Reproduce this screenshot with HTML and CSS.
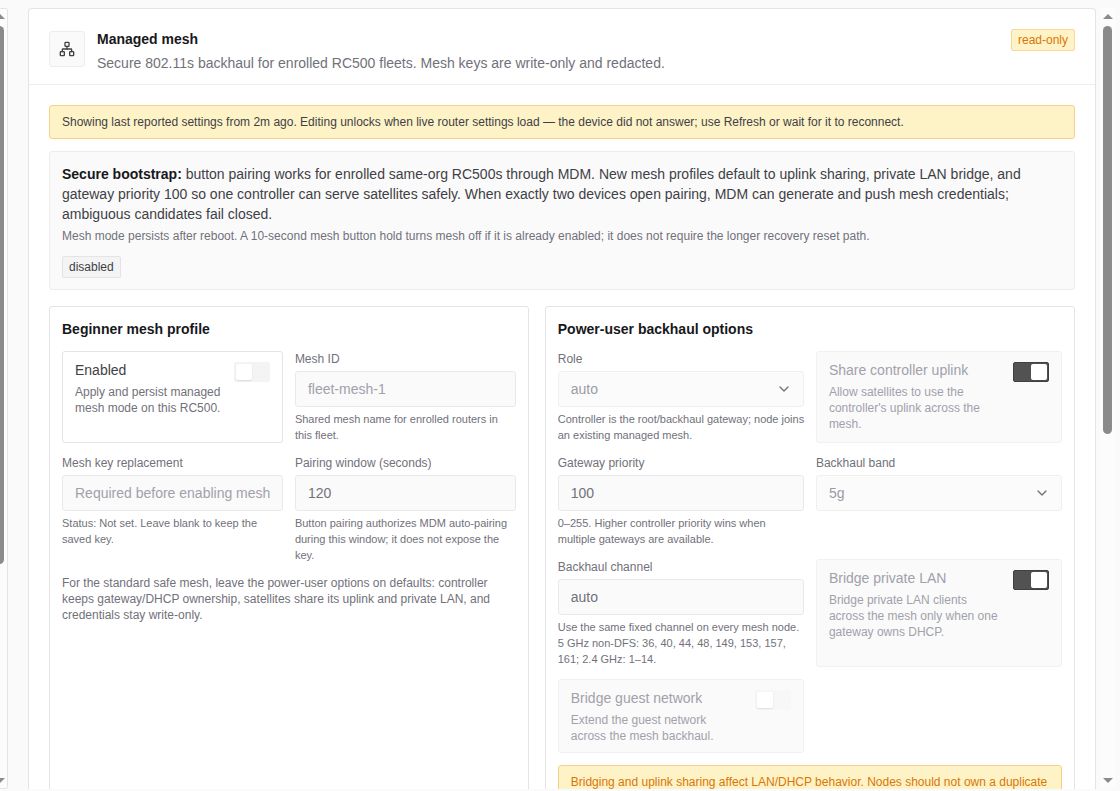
FILE: index.html
```html
<!DOCTYPE html>
<html lang="en">
<head>
    <meta charset="UTF-8">
    <meta name="viewport" content="width=device-width, initial-scale=1.0">
    <title>Managed mesh</title>
    <link rel="stylesheet" href="styles.css">
</head>
<body>
    <div class="shell">
        <aside class="side">
            <div class="scrollbar">
                <span class="arrow up"></span>
                <span class="thumb thumb-side"></span>
                <span class="arrow down"></span>
            </div>
        </aside>

        <main class="card">
            <header class="card-header">
                <div class="icon-box">
                    <svg width="16" height="16" viewBox="0 0 24 24" fill="none" stroke="currentColor" stroke-width="2" stroke-linecap="round" stroke-linejoin="round" aria-hidden="true">
                        <rect x="16" y="16" width="6" height="6" rx="1"/>
                        <rect x="2" y="16" width="6" height="6" rx="1"/>
                        <rect x="9" y="2" width="6" height="6" rx="1"/>
                        <path d="M5 16v-3a1 1 0 0 1 1-1h12a1 1 0 0 1 1 1v3"/>
                        <path d="M12 12V8"/>
                    </svg>
                </div>
                <div class="heading">
                    <h1>Managed mesh</h1>
                    <p>Secure 802.11s backhaul for enrolled RC500 fleets. Mesh keys are write-only and redacted.</p>
                </div>
                <span class="badge badge-warning">read-only</span>
            </header>

            <div class="card-body">
                <div class="notice">Showing last reported settings from 2m ago. Editing unlocks when live router settings load — the device did not answer; use Refresh or wait for it to reconnect.</div>

                <section class="summary">
                    <p class="lead"><strong>Secure bootstrap:</strong> button pairing works for enrolled same-org RC500s through MDM. New mesh profiles default to uplink sharing, private LAN bridge, and gateway priority 100 so one controller can serve satellites safely. When exactly two devices open pairing, MDM can generate and push mesh credentials; ambiguous candidates fail closed.</p>
                    <p class="note">Mesh mode persists after reboot. A 10-second mesh button hold turns mesh off if it is already enabled; it does not require the longer recovery reset path.</p>
                    <span class="badge">disabled</span>
                </section>

                <div class="panels">
                    <section class="panel">
                        <h2>Beginner mesh profile</h2>
                        <div class="fields">
                            <div class="toggle">
                                <label for="enabled">
                                    <span class="toggle-title">Enabled</span>
                                    <span class="toggle-text">Apply and persist managed mesh mode on this RC500.</span>
                                </label>
                                <input type="checkbox" id="enabled" class="switch">
                            </div>
                            <div class="field">
                                <label for="mesh-id">Mesh ID</label>
                                <input type="text" id="mesh-id" class="control" placeholder="fleet-mesh-1" disabled>
                                <p class="help">Shared mesh name for enrolled routers in this fleet.</p>
                            </div>
                            <div class="field">
                                <label for="mesh-key">Mesh key replacement</label>
                                <input type="password" id="mesh-key" class="control" placeholder="Required before enabling mesh" disabled>
                                <p class="help">Status: Not set. Leave blank to keep the saved key.</p>
                            </div>
                            <div class="field">
                                <label for="pairing">Pairing window (seconds)</label>
                                <input type="number" id="pairing" class="control" value="120" disabled>
                                <p class="help">Button pairing authorizes MDM auto-pairing during this window; it does not expose the key.</p>
                            </div>
                        </div>
                        <p class="note">For the standard safe mesh, leave the power-user options on defaults: controller keeps gateway/DHCP ownership, satellites share its uplink and private LAN, and credentials stay write-only.</p>
                    </section>

                    <section class="panel">
                        <h2>Power-user backhaul options</h2>
                        <div class="fields">
                            <div class="field">
                                <label for="role">Role</label>
                                <div class="select">
                                    <select id="role" class="control" disabled>
                                        <option>auto</option>
                                    </select>
                                    <svg class="chevron" viewBox="0 0 24 24" aria-hidden="true"><path d="m6 9 6 6 6-6"/></svg>
                                </div>
                                <p class="help">Controller is the root/backhaul gateway; node joins an existing managed mesh.</p>
                            </div>
                            <div class="toggle is-disabled">
                                <label for="uplink">
                                    <span class="toggle-title">Share controller uplink</span>
                                    <span class="toggle-text">Allow satellites to use the controller's uplink across the mesh.</span>
                                </label>
                                <input type="checkbox" id="uplink" class="switch" checked disabled>
                            </div>
                            <div class="field">
                                <label for="priority">Gateway priority</label>
                                <input type="number" id="priority" class="control" value="100" disabled>
                                <p class="help">0–255. Higher controller priority wins when multiple gateways are available.</p>
                            </div>
                            <div class="field">
                                <label for="band">Backhaul band</label>
                                <div class="select">
                                    <select id="band" class="control" disabled>
                                        <option>5g</option>
                                    </select>
                                    <svg class="chevron" viewBox="0 0 24 24" aria-hidden="true"><path d="m6 9 6 6 6-6"/></svg>
                                </div>
                            </div>
                            <div class="field">
                                <label for="channel">Backhaul channel</label>
                                <input type="text" id="channel" class="control" value="auto" disabled>
                                <p class="help">Use the same fixed channel on every mesh node. 5 GHz non-DFS: 36, 40, 44, 48, 149, 153, 157, 161; 2.4 GHz: 1–14.</p>
                            </div>
                            <div class="toggle is-disabled">
                                <label for="bridge-lan">
                                    <span class="toggle-title">Bridge private LAN</span>
                                    <span class="toggle-text">Bridge private LAN clients across the mesh only when one gateway owns DHCP.</span>
                                </label>
                                <input type="checkbox" id="bridge-lan" class="switch" checked disabled>
                            </div>
                            <div class="toggle is-disabled">
                                <label for="bridge-guest">
                                    <span class="toggle-title">Bridge guest network</span>
                                    <span class="toggle-text">Extend the guest network across the mesh backhaul.</span>
                                </label>
                                <input type="checkbox" id="bridge-guest" class="switch" disabled>
                            </div>
                        </div>
                        <div class="notice notice-warning">Bridging and uplink sharing affect LAN/DHCP behavior. Nodes should not own a duplicate</div>
                    </section>
                </div>
            </div>
        </main>

        <div class="scrollbar">
            <span class="arrow up"></span>
            <span class="thumb thumb-main"></span>
            <span class="arrow down"></span>
        </div>
    </div>
</body>
</html>
```
FILE: styles.css
```css
* {
    box-sizing: border-box;
}

body {
    margin: 0;
    background-color: #fafafa;
    color: #3f3f46;
    font-family: "Liberation Sans", Arial, sans-serif;
    font-size: 14px;
    line-height: 20px;
}

h1, h2, p {
    margin: 0;
    font-size: 14px;
}

h1, h2, strong {
    color: #18181b;
    font-weight: bold;
}

.shell {
    display: flex;
    height: 100vh;
    padding: 8px 5px 2px 0;
    overflow: hidden;
}

/* right edge of the side column */
.side {
    display: flex;
    justify-content: flex-end;
    flex: none;
    width: 8px;
    margin-right: 20px;
    border: 1px solid #e4e4e7;
    border-left: none;
    border-radius: 0 3px 3px 0;
    overflow: hidden;
}

/* scrollbars */
.scrollbar {
    display: flex;
    flex-direction: column;
    align-items: center;
    flex: none;
    width: 15px;
    padding: 6px 0;
    background-color: #fcfcfc;
}

.side .scrollbar {
    padding: 5px 0;
}

.arrow {
    border: 5px solid transparent;
}

.arrow.up {
    border-top: none;
    border-bottom-color: #8b8b8b;
}

.arrow.down {
    margin-top: auto;
    border-bottom: none;
    border-top-color: #8b8b8b;
}

.thumb {
    width: 9px;
    margin-top: 7px;
    border-radius: 5px;
    background-color: #8b8b8b;
}

.thumb-main {
    height: 53%;
}

.thumb-side {
    height: 70%;
}

/* card */
.card {
    flex: 1;
    min-width: 0;
    margin-right: 4px;
    border: 1px solid #e4e4e7;
    border-bottom: none;
    border-radius: 4px 4px 0 0;
    background-color: #fff;
    overflow: hidden;
}

.card-header {
    display: flex;
    align-items: flex-start;
    gap: 12px;
    padding: 20px 20px 11px;
    border-bottom: 1px solid #ededef;
}

.icon-box {
    display: flex;
    align-items: center;
    justify-content: center;
    width: 36px;
    height: 36px;
    margin-top: 2px;
    border: 1px solid #ededef;
    border-radius: 3px;
    background-color: #fafafa;
}

.heading {
    flex: 1;
}

.heading p {
    margin-top: 4px;
    color: #71717a;
}

.badge {
    display: inline-block;
    padding: 2px 6px;
    border: 1px solid #e4e4e7;
    border-radius: 2px;
    background-color: #f4f4f5;
    font-size: 12px;
    line-height: 16px;
}

.badge-warning {
    border-color: #fad897;
    background-color: #fef3c7;
    color: #d97706;
}

.card-body {
    padding: 20px;
}

.notice {
    padding: 8px 12px;
    border: 1px solid #f5d08a;
    border-radius: 3px;
    background-color: #fef3c7;
    font-size: 12px;
    line-height: 16px;
}

.notice-warning {
    margin-top: 12px;
    color: #d97706;
}

.note {
    color: #71717a;
    font-size: 12px;
    line-height: 16px;
}

.summary {
    display: flex;
    flex-direction: column;
    align-items: flex-start;
    margin-top: 12px;
    padding: 12px 12px 11px;
    border: 1px solid #ededef;
    border-radius: 3px;
    background-color: #fafafa;
}

.summary .note {
    margin: 4px 0 12px;
}

/* panels */
.panels {
    display: grid;
    grid-template-columns: 95fr 105fr;
    gap: 16px;
    margin-top: 16px;
}

.panel {
    min-height: 560px;
    padding: 12px;
    border: 1px solid #e4e4e7;
    border-radius: 3px;
}

.panel > .note {
    margin-top: 12px;
}

.fields {
    display: grid;
    grid-template-columns: 1fr 1fr;
    gap: 12px;
    margin-top: 12px;
}

.field {
    display: flex;
    flex-direction: column;
    gap: 4px;
    min-width: 0;
}

.field label {
    color: #71717a;
    font-size: 12px;
    line-height: 16px;
}

.control {
    width: 100%;
    height: 36px;
    margin: 0;
    padding: 0 12px;
    border: 1px solid #e9e9eb;
    border-radius: 3px;
    background-color: #fafafa;
    color: #71717a;
    font-family: inherit;
    font-size: 14px;
    appearance: none;
}

.control::placeholder {
    color: #a1a1aa;
}

.select {
    position: relative;
}

.select .control {
    display: block;
    opacity: 0.7;
}

.chevron {
    position: absolute;
    top: 10px;
    right: 12px;
    width: 16px;
    height: 16px;
    fill: none;
    stroke: #71717a;
    stroke-width: 2;
    stroke-linecap: round;
    stroke-linejoin: round;
    pointer-events: none;
}

.help {
    margin-right: -2px;
    color: #71717a;
    font-size: 11px;
    line-height: 16px;
}

/* toggles */
.toggle {
    display: flex;
    align-items: flex-start;
    justify-content: space-between;
    gap: 12px;
    padding: 8px 12px;
    border: 1px solid #e4e4e7;
    border-radius: 3px;
}

.toggle-title,
.toggle-text {
    display: block;
}

.toggle-text {
    margin-top: 4px;
    color: #71717a;
    font-size: 12px;
    line-height: 16px;
}

.switch {
    flex: none;
    width: 36px;
    height: 20px;
    margin: 2px 0 0;
    padding: 2px;
    border-radius: 2px;
    background-color: #f4f4f5;
    appearance: none;
}

.switch::before {
    content: "";
    display: block;
    width: 16px;
    height: 16px;
    border-radius: 2px;
    background-color: #fff;
    box-shadow: 0 1px 2px rgba(0, 0, 0, 0.1);
}

.switch:checked {
    border: 1px solid #404040;
    padding: 1px;
    background-color: #525252;
}

.switch:checked::before {
    margin-left: auto;
}

.is-disabled {
    border-color: #f1f1f3;
    background-color: #fafafa;
}

.is-disabled .switch:not(:checked) {
    background-color: #f7f7f8;
}

.is-disabled .toggle-title,
.is-disabled .toggle-text {
    color: #a1a1aa;
}
```
